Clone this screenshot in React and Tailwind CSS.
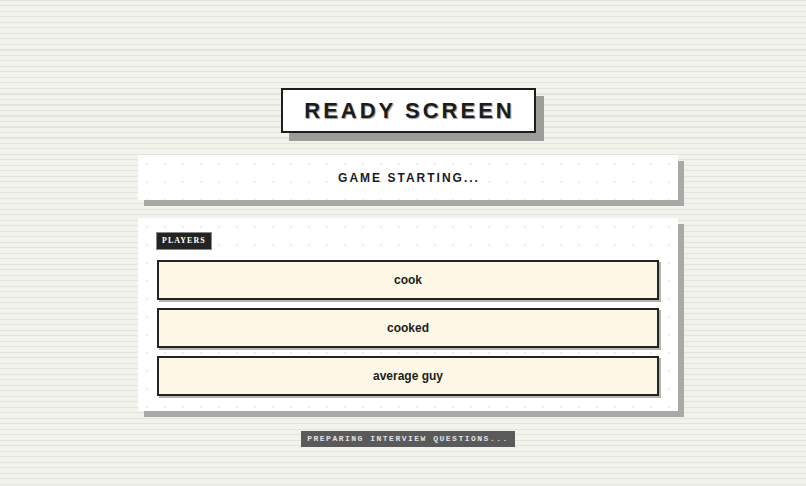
import React from 'react';

const players = ['cook', 'cooked', 'average guy'];

export default function App() {
  return (
    <div
      className="min-h-[486px] w-full bg-[#f3f3ee] bg-[repeating-linear-gradient(180deg,#e4e4dc_0px,#e4e4dc_1px,transparent_1px,transparent_5.5px)] font-['Liberation_Sans',Arial,sans-serif] text-[#1c1c1c]"
    >
      <div className="flex flex-col items-center pt-[88px] pl-[10px]">
        {/* Title */}
        <div className="flex h-[45px] w-[255px] items-center justify-center border-2 border-[#1e1e1e] bg-white shadow-[8px_8px_0_#9c9c98]">
          <h1 className="pl-[3px] text-[22px] font-bold tracking-[3px] [text-shadow:1px_1px_1px_#9a9a9a]">
            READY SCREEN
          </h1>
        </div>

        {/* Status */}
        <div className="mt-[22px] flex h-[45px] w-[540px] items-center justify-center bg-white bg-[radial-gradient(#ececec_1px,transparent_1px)] bg-[length:18px_18px] shadow-[6px_6px_0_#a9a9a5]">
          <p className="pl-[2px] text-[12px] font-bold tracking-[2px]">GAME STARTING...</p>
        </div>

        {/* Players */}
        <div className="mt-[18px] w-[540px] bg-white bg-[radial-gradient(#ececec_1px,transparent_1px)] bg-[length:18px_18px] px-[19px] pt-[15px] pb-[15px] shadow-[6px_6px_0_#a9a9a5]">
          <div className="flex h-[16px] w-fit items-center bg-[#232323] px-[5px] font-['Liberation_Serif',serif] text-[8px] leading-none font-bold tracking-[1px] text-white outline outline-1 outline-[#888]">
            PLAYERS
          </div>
          <div className="mt-[11px] flex flex-col gap-[8px]">
            {players.map((name) => (
              <div
                key={name}
                className="flex h-[40px] items-center justify-center border-2 border-[#242424] bg-[#fdf8e5] text-[12px] font-bold shadow-[2px_2px_0_#b5b5b0]"
              >
                {name}
              </div>
            ))}
          </div>
        </div>

        {/* Footer label */}
        <div className="mt-[20px] flex h-[16px] items-center bg-[#5a5a5a] px-[6px] font-['Liberation_Mono',monospace] text-[8px] leading-none font-bold tracking-[1.5px] text-[#e2e2e2]">
          PREPARING INTERVIEW QUESTIONS...
        </div>
      </div>
    </div>
  );
}
